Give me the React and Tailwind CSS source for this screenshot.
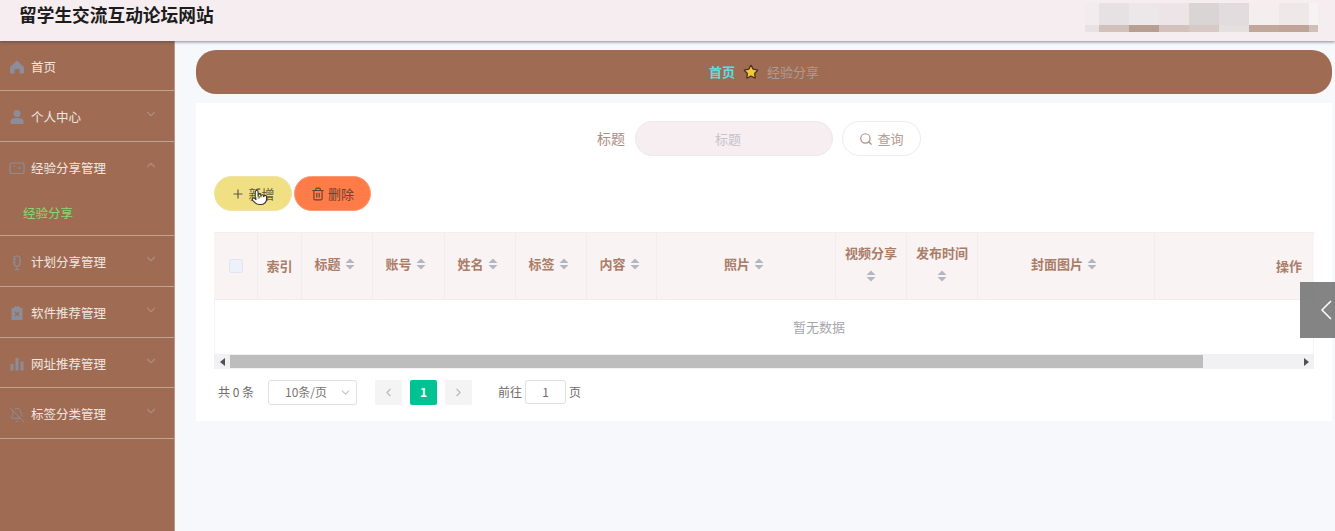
import { ChevronDown, ChevronUp, ChevronLeft, ChevronRight, Plus, Trash2, Search, Star, BellOff, Pointer } from 'lucide-react';

const font = { fontFamily: '"Noto Sans CJK SC", "Liberation Sans", sans-serif' };

// sidebar icons, drawn to match the reference glyphs
const HomeIcon = () => (
  <svg width="16" height="16" viewBox="0 0 16 16" fill="#8b8d9b"><path d="M8 1.5 15 8v6.5h-4.5V10h-5v4.5H1V8z" /></svg>
);
const UserIcon = () => (
  <svg width="16" height="16" viewBox="0 0 16 16" fill="#8b8d9b"><circle cx="8" cy="4.5" r="3.5" /><path d="M1.5 15v-2.5C1.500 10 4 9 8 9s6.500 1 6.500 3.500V15z" /></svg>
);
const WalletIcon = () => (
  <svg width="16" height="16" viewBox="0 0 16 16" fill="none" stroke="#8b8d9b" strokeWidth="1.200"><rect x="1" y="3" width="14" height="10.500" rx="1.500" /><path d="M9 8h3" /><path d="M4 6h2" /></svg>
);
const MicIcon = () => (
  <svg width="16" height="16" viewBox="0 0 16 16" fill="none" stroke="#8b8d9b" strokeWidth="1.200"><rect x="5" y="1" width="6" height="10" rx="2.500" /><path d="M5 4h2M5 7h2" /><path d="M8 11v2.500M5.500 14.500h5" /></svg>
);
const ClipIcon = () => (
  <svg width="16" height="16" viewBox="0 0 16 16" fill="#8b8d9b"><path d="M2.500 3H5V1.500h6V3h2.500v12h-11z" /><path d="m6 7 4 4M10 7l-4 4" stroke="#9f6c53" strokeWidth="1.200" /></svg>
);
const BarsIcon = () => (
  <svg width="16" height="16" viewBox="0 0 16 16" fill="#8b8d9b"><rect x="1.500" y="8" width="3" height="6.500" /><rect x="6.500" y="2" width="3" height="12.500" /><rect x="11.500" y="5.500" width="3" height="9" /></svg>
);

const Sort = () => (
  <svg width="10" height="12" viewBox="0 0 10 12" fill="#b4b7c2" className="shrink-0"><path d="M5 0.500 9.500 5h-9z" /><path d="M5 11.500.5 7h9z" /></svg>
);

const menu = [
  { label: '首页', icon: <HomeIcon /> },
  { label: '个人中心', icon: <UserIcon />, arrow: 'down' },
  { label: '经验分享管理', icon: <WalletIcon />, arrow: 'up', open: true },
  { label: '计划分享管理', icon: <MicIcon />, arrow: 'down' },
  { label: '软件推荐管理', icon: <ClipIcon />, arrow: 'down' },
  { label: '网址推荐管理', icon: <BarsIcon />, arrow: 'down' },
  { label: '标签分类管理', icon: <BellOff size={16} color="#8b8d9b" strokeWidth={1.500} />, arrow: 'down' },
];

const columns = [
  { w: 'w-[71px]', label: '标题', left: true },
  { w: 'w-[72px]', label: '账号', left: true },
  { w: 'w-[71px]', label: '姓名', left: true },
  { w: 'w-[71px]', label: '标签', left: true },
  { w: 'w-[70px]', label: '内容', left: true },
  { w: 'w-[179px]', label: '照片' },
  { w: 'w-[71px]', label: '视频分享', wrap: true },
  { w: 'w-[71px]', label: '发布时间', wrap: true },
  { w: 'w-[177px]', label: '封面图片' },
];

// blurred account name in the header
const mosaic = [
  ['w-[14px]', 'bg-[#f3ecee]', 'bg-[#e8e2e4]'],
  ['w-[30px]', 'bg-[#e6e1e2]', 'bg-[#d2c1bb]'],
  ['w-[30px]', 'bg-[#ece7e9]', 'bg-[#b99f91]'],
  ['w-[30px]', 'bg-[#ece4e6]', 'bg-[#d3c2bc]'],
  ['w-[30px]', 'bg-[#dad5d5]', 'bg-[#d7c9c5]'],
  ['w-[30px]', 'bg-[#e3dcde]', 'bg-[#e6dfe0]'],
  ['w-[30px]', 'bg-[#f5eeef]', 'bg-[#c2a79b]'],
  ['w-[30px]', 'bg-[#eee9e8]', 'bg-[#bfa497]'],
  ['w-[9px]', 'bg-[#f7f2f4]', 'bg-[#d0bfb8]'],
];

function Sidebar() {
  return (
    <aside className="w-[175px] shrink-0 bg-[#9f6c53] border-r border-[#b9968a] text-[12.500px] text-[#f1e7e1]">
      {menu.map((item, i) => (
        <div key={item.label} className="border-b border-[#c0a294]">
          <div className={`flex items-center pl-[9px] pr-[16px] pt-[3px] ${i === 0 ? 'h-[49px]' : 'h-[49.700px]'}`}>
            <span className="w-[22px] flex justify-start">{item.icon}</span>
            <span>{item.label}</span>
            {item.arrow === 'down' && <ChevronDown size={14} className="ml-auto -mt-[7px] text-[#b08a78]" />}
            {item.arrow === 'up' && <ChevronUp size={14} className="ml-auto -mt-[7px] text-[#b08a78]" />}
          </div>
          {item.open && (
            <div className="h-[44px] pl-[23px] flex items-center text-[#86d96e]">经验分享</div>
          )}
        </div>
      ))}
    </aside>
  );
}

function TableHead() {
  return (
    <div className="flex h-[68px] bg-[#f9f3f3] border-t border-b border-[#f3eeee] text-[13px] font-bold text-[#a97d68]">
      <div className="w-[44px] flex items-center justify-center border-r border-[#f1ecef]">
        <span className="w-[14px] h-[14px] rounded-[2px] bg-[#eef1fa] border border-[#e2e5f0]" />
      </div>
      <div className="w-[44px] flex items-center justify-center border-r border-[#f1ecef]">索引</div>
      {columns.map((c) =>
        c.wrap ? (
          <div key={c.label} className={`${c.w} flex flex-col items-center justify-center gap-[8px] pb-[7px] border-r border-[#f1ecef]`}>
            <span>{c.label}</span>
            <Sort />
          </div>
        ) : (
          <div key={c.label} className={`${c.w} flex items-center gap-[4px] pb-[4px] border-r border-[#f1ecef] ${c.left ? 'pl-[12.500px]' : 'justify-center pr-[4px]'}`}>
            <span>{c.label}</span>
            <Sort />
          </div>
        )
      )}
      <div className="flex-1 flex items-center justify-end pr-[12px]">操作</div>
    </div>
  );
}

function Pagination() {
  return (
    <div className="flex items-center mt-[11px] pl-1 h-[24px] text-[12px] text-[#6f6a6a]">
      <span className="w-[50px]">共 0 条</span>
      <div className="w-[89px] h-[25px] flex items-center bg-white border border-[#e2dfe0] rounded-[3px] pl-[16px] pr-[4px] text-[#7a7474]">
        <span>10条/页</span>
        <ChevronDown size={13} className="ml-auto text-[#c0c4cc]" />
      </div>
      <button className="ml-[18px] w-[27px] h-[25px] flex items-center justify-center bg-[#f4f4f5] rounded-[2px] text-[#b5b8bf]"><ChevronLeft size={13} /></button>
      <span className="ml-[8px] w-[27px] h-[25px] flex items-center justify-center bg-[#00c292] rounded-[2px] text-white font-bold">1</span>
      <button className="ml-[8px] w-[27px] h-[25px] flex items-center justify-center bg-[#f4f4f5] rounded-[2px] text-[#b5b8bf]"><ChevronRight size={13} /></button>
      <span className="ml-[26px]">前往</span>
      <span className="ml-[3px] w-[41px] h-[24px] flex items-center justify-center bg-white border border-[#e2dfe0] rounded-[3px]">1</span>
      <span className="ml-[3px]">页</span>
    </div>
  );
}

export default function App() {
  return (
    <div style={font} className="relative w-[1335px] h-[531px] overflow-hidden bg-[#f7f8fc]">
      <header className="relative z-10 h-[41px] bg-[#f6edf0] flex items-center justify-between shadow-[0_1px_3px_rgba(60,60,80,0.6)] pl-[19px] pr-[17px]">
        <h1 className="text-[17.700px] font-bold text-[#1c1c1c] -mt-[13px]">留学生交流互动论坛网站</h1>
        <div className="flex flex-col h-[29px] -mt-[7px]">
          <div className="flex h-[22px]">
            {mosaic.map((m, i) => <span key={i} className={`${m[0]} ${m[1]}`} />)}
          </div>
          <div className="flex h-[7px]">
            {mosaic.map((m, i) => <span key={i} className={`${m[0]} ${m[2]}`} />)}
          </div>
        </div>
      </header>

      <div className="flex h-[490px]">
        <Sidebar />

        <main className="flex-1 pl-[21px] pr-[3px] pt-[9px]">
          <div className="h-[44px] rounded-[20px] bg-[#9f6c53] flex items-center justify-center gap-[8px] text-[13px]">
            <span className="font-bold text-[#5fdde2]">首页</span>
            <Star size={16} fill="#f7c733" color="#4b3422" strokeWidth={2} />
            <span className="text-[#ab9a98]">经验分享</span>
          </div>

          <section className="mt-[9px] h-[318px] bg-white pt-[18px] px-[18px]">
            <div className="flex items-center justify-center h-[35px] text-[13px] pr-[10px]">
              <span className="text-[14px] text-[#ab8d82] mr-[10px]">标题</span>
              <div className="w-[198px] h-[35px] rounded-[18px] bg-[#f6eef0] border border-[#eee8ea] flex items-center justify-center pr-[12px] text-[#c6c3ca]">标题</div>
              <button className="ml-[9px] w-[79px] h-[35px] rounded-[18px] bg-white border border-[#efebec] flex items-center justify-center gap-1 text-[#b59c92]">
                <Search size={14} className="text-[#ab8d82]" />
                查询
              </button>
            </div>

            <div className="flex gap-[2px] mt-[20px] text-[13px]">
              <button className="w-[78px] h-[35px] rounded-[18px] bg-[#f1e083] border border-[#eee3a8] flex items-center justify-center gap-[3px] text-[#5f5a45]">
                <Plus size={14} />
                新增
              </button>
              <button className="w-[77px] h-[35px] rounded-[18px] bg-[#ff7b47] border border-[#fb9a75] flex items-center justify-center gap-[3px] text-[#6b4234]">
                <Trash2 size={14} />
                删除
              </button>
            </div>

            <div className="mt-[21px] w-[1100px]">
              <TableHead />
              <div className="h-[54px] flex items-center justify-center pl-[110px] border-x border-[#f5f3f4] text-[13px] text-[#a6a6ab]">暂无数据</div>
              <div className="h-[15px] flex items-center bg-[#f1f0f2]">
                <span className="w-[16px] flex justify-center">
                  <span className="border-y-[4px] border-r-[5px] border-y-transparent border-r-[#505050]" />
                </span>
                <span className="w-[973px] h-[13px] bg-[#bdbdbd]" />
                <span className="ml-auto w-[16px] flex justify-center">
                  <span className="border-y-[4px] border-l-[5px] border-y-transparent border-l-[#505050]" />
                </span>
              </div>
              <Pagination />
            </div>
          </section>
        </main>
      </div>

      {/* collapse handle on the right edge */}
      <div className="absolute right-0 top-[282px] w-[35px] h-[56px] bg-[#6f6f6f]/85 flex items-center justify-end pr-[3px]">
        <svg width="12" height="20" viewBox="0 0 12 20" fill="none" stroke="#ffffff" strokeWidth="1.500"><path d="M11 1 2 10l9 9" /></svg>
      </div>

      {/* mouse pointer caught in the screenshot */}
      <Pointer size={17} fill="#ffffff" color="#33302c" strokeWidth={1.500} className="absolute left-[251px] top-[189px]" />
    </div>
  );
}
